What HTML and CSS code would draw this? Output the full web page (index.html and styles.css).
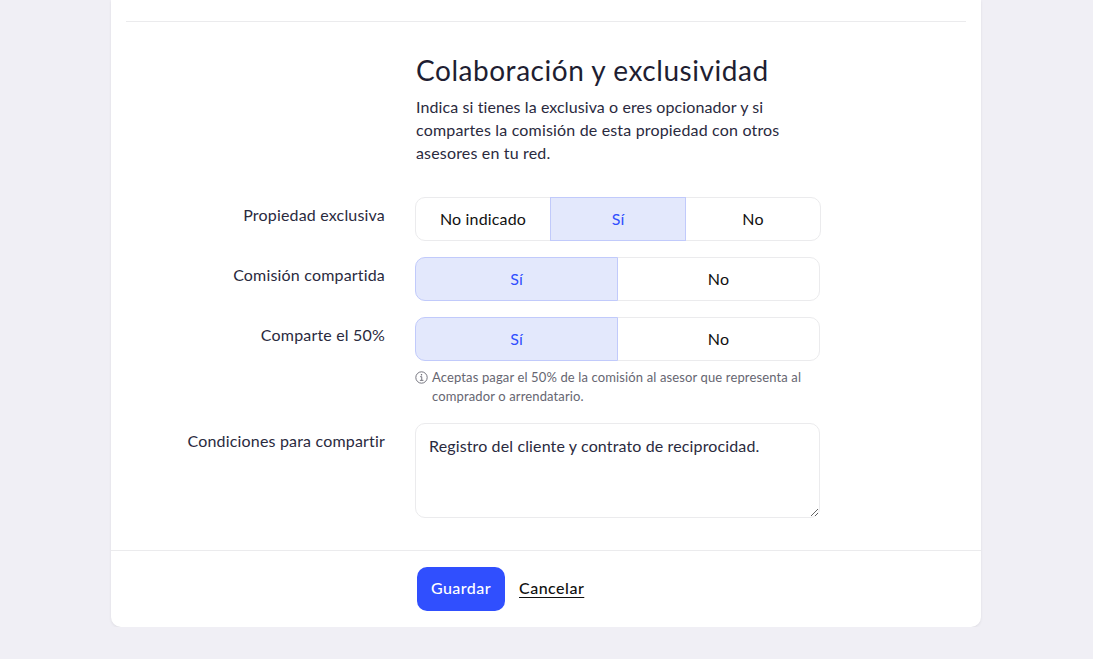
FILE: index.html
```html
<!DOCTYPE html>
<html lang="es">
<head>
    <meta charset="UTF-8">
    <meta name="viewport" content="width=device-width, initial-scale=1.0">
    <title>Colaboración y exclusividad</title>
    <link rel="stylesheet" href="styles.css">
</head>
<body>

    <form class="panel">
        <div class="panel-body">
            <hr class="divider">

            <div class="intro">
                <h2>Colaboración y exclusividad</h2>
                <p><span class="intro-first">Indica si tienes la exclusiva o eres opcionador y si</span><br>compartes la comisión de esta propiedad con otros<br>asesores en tu red.</p>
            </div>

            <!-- Opciones -->
            <div class="form-row">
                <span class="label">Propiedad exclusiva</span>
                <div class="btn-group three">
                    <button type="button" class="option">No indicado</button>
                    <button type="button" class="option active">Sí</button>
                    <button type="button" class="option">No</button>
                </div>
            </div>

            <div class="form-row">
                <span class="label">Comisión compartida</span>
                <div class="btn-group">
                    <button type="button" class="option active">Sí</button>
                    <button type="button" class="option">No</button>
                </div>
            </div>

            <div class="form-row">
                <span class="label">Comparte el 50%</span>
                <div>
                    <div class="btn-group">
                        <button type="button" class="option active">Sí</button>
                        <button type="button" class="option">No</button>
                    </div>
                    <div class="hint">
                        <svg class="hint-icon" viewBox="0 0 16 16" width="13" height="13">
                            <circle cx="8" cy="8" r="7" fill="none" stroke="currentColor" stroke-width="1.1"/>
                            <path d="M6.3 7h2v4.5M6 11.5h4.4" fill="none" stroke="currentColor" stroke-width="1.1"/>
                            <circle cx="8" cy="4.5" r="0.9" fill="currentColor"/>
                        </svg>
                        <p>Aceptas pagar el 50% de la comisión al asesor que representa al<br>comprador o arrendatario.</p>
                    </div>
                </div>
            </div>

            <div class="form-row">
                <label class="label" for="condiciones">Condiciones para compartir</label>
                <textarea id="condiciones" class="text-area">Registro del cliente y contrato de reciprocidad.</textarea>
            </div>
        </div>

        <!-- Acciones -->
        <div class="panel-footer">
            <button type="button" class="btn-save">Guardar</button>
            <a href="#" class="link-cancel">Cancelar</a>
        </div>
    </form>

</body>
</html>
```

FILE: styles.css
```css
:root {
    --color-principal: #304ffe;
    --color-activo: #e3e8fc;
    --color-borde: #ebebed;
    --color-titulo: #1e1e32;
    --color-texto: #2a2a3e;
}

* {
    box-sizing: border-box;
}

body {
    margin: 0;
    background-color: #f0eff5;
    color: var(--color-texto);
    font-family: Lato, "Open Sans", sans-serif;
    font-size: 16px;
    line-height: 23px;
}

button,
textarea {
    font: inherit;
}

.panel {
    width: 870px;
    margin-left: 111px;
    background-color: white;
    border-radius: 0 0 10px 10px;
    box-shadow: 0 1px 3px rgba(0, 0, 0, 0.08);
}

.panel-body {
    height: 550px;
    padding: 21px 15px 0;
}

.divider {
    height: 1px;
    margin: 0;
    border: none;
    background-color: var(--color-borde);
}

.intro {
    width: 405px;
    margin: 31px 0 33px 290px;
}

.intro h2 {
    margin: 0 0 8px;
    color: var(--color-titulo);
    font-size: 28px;
    font-weight: 400;
    line-height: 34px;
    letter-spacing: 0.54px;
    white-space: nowrap;
}

.intro p {
    margin: 0;
    letter-spacing: 0.17px;
    white-space: nowrap;
}

.intro-first {
    letter-spacing: 0.1px;
}

.form-row {
    display: grid;
    grid-template-columns: 259px 405px;
    column-gap: 30px;
    margin-bottom: 16px;
}

.label {
    padding-top: 6px;
    text-align: right;
    letter-spacing: 0.18px;
}

.btn-group {
    display: flex;
    height: 44px;
}

.btn-group.three {
    width: 406px;
}

.option {
    flex: 1;
    margin-right: -1px;
    padding: 0 0 2px;
    background-color: white;
    border: 1px solid var(--color-borde);
    color: #111;
    letter-spacing: 0.15px;
    cursor: pointer;
}

.option:first-child {
    border-radius: 10px 0 0 10px;
}

.option:last-child {
    margin-right: 0;
    border-radius: 0 10px 10px 0;
}

.option.active {
    z-index: 1;
    background-color: var(--color-activo);
    border-color: #c1cafb;
    color: var(--color-principal);
}

.hint {
    display: flex;
    gap: 4px;
    margin-top: 7px;
    padding-bottom: 1px;
    color: #666671;
    font-size: 13px;
    line-height: 19px;
    letter-spacing: 0.13px;
}

.hint-icon {
    margin-top: 3px;
}

.hint p {
    margin: 0;
    white-space: nowrap;
}

.text-area {
    height: 95px;
    margin: 0;
    padding: 10px 12px 10px 13px;
    background-color: white;
    border: 1px solid var(--color-borde);
    border-radius: 10px;
    color: var(--color-texto);
    letter-spacing: 0.13px;
    resize: vertical;
}

.panel-footer {
    display: flex;
    align-items: center;
    gap: 14px;
    height: 77px;
    padding-left: 306px;
    border-top: 1px solid var(--color-borde);
}

.btn-save {
    width: 88px;
    height: 44px;
    padding: 0 0 3px;
    background-color: var(--color-principal);
    border: none;
    border-radius: 10px;
    color: white;
    font-weight: 500;
    letter-spacing: 0.45px;
    cursor: pointer;
}

.link-cancel {
    padding-bottom: 3px;
    color: #111;
    font-weight: 500;
    letter-spacing: 0.5px;
    text-underline-offset: 3px;
}
```
